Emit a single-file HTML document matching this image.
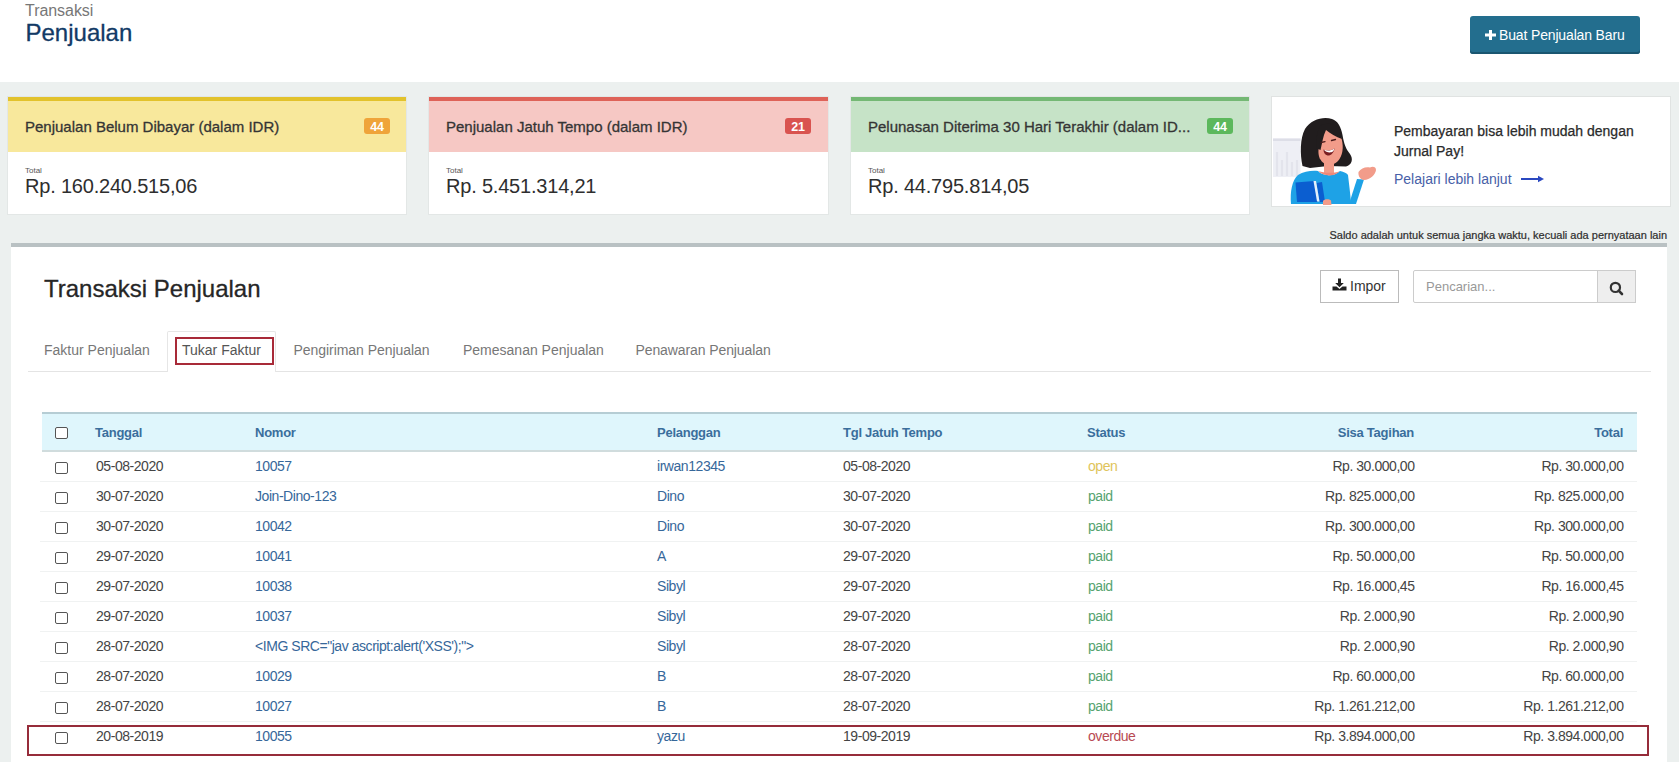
<!DOCTYPE html>
<html><head><meta charset="utf-8"><style>
html,body{margin:0;padding:0;}
body{width:1679px;height:762px;overflow:hidden;background:#ecf0ef;position:relative;font-family:"Liberation Sans",sans-serif;}
.t{position:absolute;white-space:nowrap;}
.r{position:absolute;}
</style></head><body>
<div class="r" style="left:0px;top:0px;width:1679px;height:82px;background:#fff"></div>
<div class="t" style="left:25px;top:3.46px;font-size:16px;line-height:16px;color:#777;font-weight:normal;letter-spacing:-0.05px;">Transaksi</div>
<div class="t" style="left:25.5px;top:21.28px;font-size:24px;line-height:24px;color:#123a66;font-weight:normal;-webkit-text-stroke:0.3px #123a66;">Penjualan</div>
<div class="r" style="left:1470px;top:16px;width:170px;height:38px;background:#236e8e;border-radius:3px;box-shadow:inset 0 -2px 0 #1a5670"></div>
<svg class="r" style="left:1485px;top:30px" width="11" height="10" viewBox="0 0 11 10"><path d="M4 0h3v3.5h4v3h-4v3.5h-3v-3.5h-4v-3h4z" fill="#fff"/></svg>
<div class="t" style="left:1499px;top:28.15px;font-size:14px;line-height:14px;color:#fff;font-weight:normal;letter-spacing:-0.15px;">Buat Penjualan Baru</div>
<div class="r" style="left:8px;top:97px;width:398px;height:117px;background:#fff;box-shadow:0 0 0 1px rgba(0,0,0,.035)"></div>
<div class="r" style="left:8px;top:97px;width:398px;height:4px;background:#e2c22c"></div>
<div class="r" style="left:8px;top:101px;width:398px;height:51px;background:#f8e89c"></div>
<div class="t" style="left:25px;top:119.30px;font-size:15px;line-height:15px;color:#353535;font-weight:normal;-webkit-text-stroke:0.3px #353535;">Penjualan Belum Dibayar (dalam IDR)</div>
<div class="r" style="left:364px;top:118px;width:26px;height:16px;background:#efa43a;border-radius:3px"></div>
<div class="t" style="left:364px;top:118.5px;width:26px;height:16px;line-height:16px;text-align:center;font-size:12.5px;font-weight:bold;color:#fff;letter-spacing:-0.3px">44</div>
<div class="t" style="left:25px;top:167.23px;font-size:8px;line-height:8px;color:#555;font-weight:normal;">Total</div>
<div class="t" style="left:25px;top:176.07px;font-size:20px;line-height:20px;color:#2e2e2e;font-weight:normal;letter-spacing:-0.2px;">Rp. 160.240.515,06</div>
<div class="r" style="left:429px;top:97px;width:399px;height:117px;background:#fff;box-shadow:0 0 0 1px rgba(0,0,0,.035)"></div>
<div class="r" style="left:429px;top:97px;width:399px;height:4px;background:#de6258"></div>
<div class="r" style="left:429px;top:101px;width:399px;height:51px;background:#f6c8c4"></div>
<div class="t" style="left:446px;top:119.30px;font-size:15px;line-height:15px;color:#353535;font-weight:normal;-webkit-text-stroke:0.3px #353535;">Penjualan Jatuh Tempo (dalam IDR)</div>
<div class="r" style="left:785px;top:118px;width:26px;height:16px;background:#d9534f;border-radius:3px"></div>
<div class="t" style="left:785px;top:118.5px;width:26px;height:16px;line-height:16px;text-align:center;font-size:12.5px;font-weight:bold;color:#fff;letter-spacing:-0.3px">21</div>
<div class="t" style="left:446px;top:167.23px;font-size:8px;line-height:8px;color:#555;font-weight:normal;">Total</div>
<div class="t" style="left:446px;top:176.07px;font-size:20px;line-height:20px;color:#2e2e2e;font-weight:normal;letter-spacing:-0.2px;">Rp. 5.451.314,21</div>
<div class="r" style="left:851px;top:97px;width:398px;height:117px;background:#fff;box-shadow:0 0 0 1px rgba(0,0,0,.035)"></div>
<div class="r" style="left:851px;top:97px;width:398px;height:4px;background:#74b874"></div>
<div class="r" style="left:851px;top:101px;width:398px;height:51px;background:#c6e3c7"></div>
<div class="t" style="left:868px;top:119.30px;font-size:15px;line-height:15px;color:#353535;font-weight:normal;-webkit-text-stroke:0.3px #353535;">Pelunasan Diterima 30 Hari Terakhir (dalam ID...</div>
<div class="r" style="left:1207px;top:118px;width:26px;height:16px;background:#5cb85c;border-radius:3px"></div>
<div class="t" style="left:1207px;top:118.5px;width:26px;height:16px;line-height:16px;text-align:center;font-size:12.5px;font-weight:bold;color:#fff;letter-spacing:-0.3px">44</div>
<div class="t" style="left:868px;top:167.23px;font-size:8px;line-height:8px;color:#555;font-weight:normal;">Total</div>
<div class="t" style="left:868px;top:176.07px;font-size:20px;line-height:20px;color:#2e2e2e;font-weight:normal;letter-spacing:-0.2px;">Rp. 44.795.814,05</div>
<div class="r" style="left:1272px;top:97px;width:398px;height:109px;background:#fff;box-shadow:0 0 0 1px rgba(0,0,0,.05)"></div>
<svg class="r" style="left:1272px;top:110px" width="110" height="97" viewBox="0 0 110 97">
<rect x="1" y="28.5" width="27.5" height="38.5" fill="#eeeff5"/>
<rect x="1" y="28.5" width="27.5" height="2.5" fill="#dddee7"/>
<path d="M5 66V42M10 66V50M15 66V42M20 66V52M25 66V50" stroke="#e3e4ec" stroke-width="2.2"/>
<path d="M30.5 56C28 44 28 28 33 19C39 9 52 6 60 9C66 11 69 17 70.5 25C72 34 74 39 78 44C81.5 49 80 55 74 56.5L56 56L38 58Z" fill="#211d1e"/>
<path d="M50 19C56 17 65 19 69 27C71.5 34 71.5 43 67.5 49C63.5 55 57 56 53 54C48 51 46 46 46.5 40C47 34 48 26 50 19Z" fill="#f29c8a"/>
<path d="M48 16C54 12 63 13 68 20C69 24 69 27 70 29C64 27 58 23 54 20C51 26 50 34 48.5 40L44 38C44 30 45 22 48 16Z" fill="#211d1e"/>
<path d="M51.5 39.5C55 41 59 40.5 62.5 38.5C62 43 58.5 46 55.5 45.5C53 45 51.5 42.5 51.5 39.5Z" fill="#7a1e22"/>
<path d="M52 39.8C55 41 59 40.8 62.3 38.8C62 40.5 61 41.8 59.5 42.3C56.5 42.8 53.5 42 52 39.8Z" fill="#fff"/>
<path d="M49 32.5l4 -0.8M59.5 30.5l4 -1" stroke="#4a1c1c" stroke-width="1.3" stroke-linecap="round"/>
<rect x="52" y="50" width="10" height="13" fill="#f29c8a"/>
<path d="M19 94C18 82 20 70 26 65C32 61 40 60.5 46 61C50 66 62 67 68 61C72 62 75 63 76 65C77 74 78.5 84 79 94Z" fill="#1ea2e6"/>
<path d="M46.5 61C51 66.5 62 67 67.5 61.5C63 63 52 63.5 46.5 61Z" fill="#f08878"/>
<path d="M77 94L85 69L92 69.5L84 94Z" fill="#1ea2e6"/>
<path d="M86.5 62C89 58 94 56.5 98 57.5C101 56 104 57 104 60C103.5 65 98 69.5 92 70C88 69.5 86 66 86.5 62Z" fill="#f29c8a"/>
<path d="M23.5 72.5L42 71L46 92L25 92Z" fill="#0b5ed0"/>
<path d="M44.5 73L50 72L53 92L47.5 92Z" fill="#0b5ed0"/>
<path d="M41.5 71L44 71L47.5 91.5L45 91.5Z" fill="#e4f0fb"/>
<path d="M51 91C52 89 57 88.5 59 90.5L59.5 95L51 95Z" fill="#f29c8a"/>
</svg>
<div class="t" style="left:1394px;top:123.65px;font-size:14px;line-height:14px;color:#2a2a2a;font-weight:normal;-webkit-text-stroke:0.25px #2a2a2a;">Pembayaran bisa lebih mudah dengan</div>
<div class="t" style="left:1394px;top:143.65px;font-size:14px;line-height:14px;color:#2a2a2a;font-weight:normal;-webkit-text-stroke:0.25px #2a2a2a;">Jurnal Pay!</div>
<div class="t" style="left:1394px;top:171.65px;font-size:14px;line-height:14px;color:#4760a8;font-weight:normal;">Pelajari lebih lanjut</div>
<svg class="r" style="left:1521px;top:174.5px" width="24" height="8" viewBox="0 0 24 8"><path d="M0 4h19" stroke="#2a48c0" stroke-width="2"/><path d="M17 0.8l6 3.2-6 3.2z" fill="#2a48c0"/></svg>
<div class="t" style="right:12px;top:229.69px;font-size:11px;line-height:11px;color:#2e2e2e;font-weight:normal;-webkit-text-stroke:0.2px #2e2e2e;">Saldo adalah untuk semua jangka waktu, kecuali ada pernyataan lain</div>
<div class="r" style="left:11px;top:243px;width:1656px;height:600px;background:#fff"></div>
<div class="r" style="left:11px;top:243px;width:1656px;height:4px;background:#b9c1c3"></div>
<div class="t" style="left:44px;top:277.28px;font-size:24px;line-height:24px;color:#262626;font-weight:normal;-webkit-text-stroke:0.3px #262626;">Transaksi Penjualan</div>
<div class="r" style="left:1320px;top:270px;width:79px;height:33px;background:#fff;border:1px solid #bbb;box-sizing:border-box"></div>
<div class="t" style="left:1350px;top:278.65px;font-size:14px;line-height:14px;color:#333;font-weight:normal;">Impor</div>
<svg class="r" style="left:1332px;top:278px" width="15" height="13" viewBox="0 0 15 13"><path d="M6 0.5h3v4.5h2.8l-4.3 4.3-4.3-4.3h2.8z" fill="#222"/><path d="M0.5 8.5h4l3 2.6 3-2.6h4v4h-14z" fill="#222"/></svg>
<div class="r" style="left:1413px;top:270px;width:223px;height:33px;background:#fff;border:1px solid #ccc;box-sizing:border-box;border-radius:2px"></div>
<div class="r" style="left:1597px;top:270px;width:39px;height:33px;background:#eee;border:1px solid #ccc;box-sizing:border-box"></div>
<div class="t" style="left:1426px;top:280.00px;font-size:13px;line-height:13px;color:#999;font-weight:normal;">Pencarian...</div>
<svg class="r" style="left:1608px;top:280px" width="16" height="16" viewBox="0 0 16 16"><circle cx="7.4" cy="7.4" r="4.6" fill="none" stroke="#333" stroke-width="2.2"/><path d="M10.6 10.6l3.4 3.4" stroke="#333" stroke-width="2.6" stroke-linecap="round"/></svg>
<div class="r" style="left:28px;top:371px;width:1623px;height:1px;background:#e4e4e4"></div>
<div class="r" style="left:167px;top:331px;width:109px;height:41px;background:#fff;border:1px solid #e6e6e6;border-bottom:none;box-sizing:border-box;border-radius:2px 2px 0 0"></div>
<div class="t" style="left:44px;top:343.15px;font-size:14px;line-height:14px;color:#777;font-weight:normal;">Faktur Penjualan</div>
<div class="t" style="left:182px;top:343.15px;font-size:14px;line-height:14px;color:#555;font-weight:normal;">Tukar Faktur</div>
<div class="t" style="left:293.5px;top:343.15px;font-size:14px;line-height:14px;color:#777;font-weight:normal;letter-spacing:-0.05px;">Pengiriman Penjualan</div>
<div class="t" style="left:463px;top:343.15px;font-size:14px;line-height:14px;color:#777;font-weight:normal;">Pemesanan Penjualan</div>
<div class="t" style="left:635.5px;top:343.15px;font-size:14px;line-height:14px;color:#777;font-weight:normal;letter-spacing:-0.1px;">Penawaran Penjualan</div>
<div class="r" style="left:175px;top:337px;width:99px;height:28px;border:2px solid #a82a38;box-sizing:border-box"></div>
<div class="r" style="left:42px;top:412px;width:1595px;height:40px;background:#dff6fc;border-top:2px solid #b6cdd4;border-bottom:2px solid #d0dcdd;box-sizing:border-box"></div>
<div class="r" style="left:55px;top:427px;width:13px;height:12px;border:1px solid #555;border-radius:2px;box-sizing:border-box;background:#fff"></div>
<div class="t" style="left:95px;top:426.00px;font-size:13px;line-height:13px;color:#3a6e9c;font-weight:bold;letter-spacing:-0.25px;">Tanggal</div>
<div class="t" style="left:255px;top:426.00px;font-size:13px;line-height:13px;color:#3a6e9c;font-weight:bold;letter-spacing:-0.25px;">Nomor</div>
<div class="t" style="left:657px;top:426.00px;font-size:13px;line-height:13px;color:#3a6e9c;font-weight:bold;letter-spacing:-0.25px;">Pelanggan</div>
<div class="t" style="left:843px;top:426.00px;font-size:13px;line-height:13px;color:#3a6e9c;font-weight:bold;letter-spacing:-0.25px;">Tgl Jatuh Tempo</div>
<div class="t" style="left:1087px;top:426.00px;font-size:13px;line-height:13px;color:#3a6e9c;font-weight:bold;letter-spacing:-0.25px;">Status</div>
<div class="t" style="right:265px;top:426.00px;font-size:13px;line-height:13px;color:#3a6e9c;font-weight:bold;letter-spacing:-0.25px;">Sisa Tagihan</div>
<div class="t" style="right:56px;top:426.00px;font-size:13px;line-height:13px;color:#3a6e9c;font-weight:bold;letter-spacing:-0.25px;">Total</div>
<div class="r" style="left:55px;top:462px;width:13px;height:12px;border:1px solid #555;border-radius:2px;box-sizing:border-box;background:#fff"></div>
<div class="t" style="left:96px;top:459.15px;font-size:14px;line-height:14px;color:#444;font-weight:normal;letter-spacing:-0.45px;">05-08-2020</div>
<div class="t" style="left:255px;top:459.15px;font-size:14px;line-height:14px;color:#36679a;font-weight:normal;letter-spacing:-0.45px;">10057</div>
<div class="t" style="left:657px;top:459.15px;font-size:14px;line-height:14px;color:#36679a;font-weight:normal;letter-spacing:-0.45px;">irwan12345</div>
<div class="t" style="left:843px;top:459.15px;font-size:14px;line-height:14px;color:#444;font-weight:normal;letter-spacing:-0.45px;">05-08-2020</div>
<div class="t" style="left:1088px;top:459.15px;font-size:14px;line-height:14px;color:#e0c45a;font-weight:normal;letter-spacing:-0.45px;">open</div>
<div class="t" style="right:264.5px;top:459.15px;font-size:14px;line-height:14px;color:#444;font-weight:normal;letter-spacing:-0.45px;">Rp. 30.000,00</div>
<div class="t" style="right:55.5px;top:459.15px;font-size:14px;line-height:14px;color:#444;font-weight:normal;letter-spacing:-0.45px;">Rp. 30.000,00</div>
<div class="r" style="left:40px;top:481px;width:1597px;height:1px;background:#f0f2f2"></div>
<div class="r" style="left:55px;top:492px;width:13px;height:12px;border:1px solid #555;border-radius:2px;box-sizing:border-box;background:#fff"></div>
<div class="t" style="left:96px;top:489.15px;font-size:14px;line-height:14px;color:#444;font-weight:normal;letter-spacing:-0.45px;">30-07-2020</div>
<div class="t" style="left:255px;top:489.15px;font-size:14px;line-height:14px;color:#36679a;font-weight:normal;letter-spacing:-0.45px;">Join-Dino-123</div>
<div class="t" style="left:657px;top:489.15px;font-size:14px;line-height:14px;color:#36679a;font-weight:normal;letter-spacing:-0.45px;">Dino</div>
<div class="t" style="left:843px;top:489.15px;font-size:14px;line-height:14px;color:#444;font-weight:normal;letter-spacing:-0.45px;">30-07-2020</div>
<div class="t" style="left:1088px;top:489.15px;font-size:14px;line-height:14px;color:#55a370;font-weight:normal;letter-spacing:-0.45px;">paid</div>
<div class="t" style="right:264.5px;top:489.15px;font-size:14px;line-height:14px;color:#444;font-weight:normal;letter-spacing:-0.45px;">Rp. 825.000,00</div>
<div class="t" style="right:55.5px;top:489.15px;font-size:14px;line-height:14px;color:#444;font-weight:normal;letter-spacing:-0.45px;">Rp. 825.000,00</div>
<div class="r" style="left:40px;top:511px;width:1597px;height:1px;background:#f0f2f2"></div>
<div class="r" style="left:55px;top:522px;width:13px;height:12px;border:1px solid #555;border-radius:2px;box-sizing:border-box;background:#fff"></div>
<div class="t" style="left:96px;top:519.15px;font-size:14px;line-height:14px;color:#444;font-weight:normal;letter-spacing:-0.45px;">30-07-2020</div>
<div class="t" style="left:255px;top:519.15px;font-size:14px;line-height:14px;color:#36679a;font-weight:normal;letter-spacing:-0.45px;">10042</div>
<div class="t" style="left:657px;top:519.15px;font-size:14px;line-height:14px;color:#36679a;font-weight:normal;letter-spacing:-0.45px;">Dino</div>
<div class="t" style="left:843px;top:519.15px;font-size:14px;line-height:14px;color:#444;font-weight:normal;letter-spacing:-0.45px;">30-07-2020</div>
<div class="t" style="left:1088px;top:519.15px;font-size:14px;line-height:14px;color:#55a370;font-weight:normal;letter-spacing:-0.45px;">paid</div>
<div class="t" style="right:264.5px;top:519.15px;font-size:14px;line-height:14px;color:#444;font-weight:normal;letter-spacing:-0.45px;">Rp. 300.000,00</div>
<div class="t" style="right:55.5px;top:519.15px;font-size:14px;line-height:14px;color:#444;font-weight:normal;letter-spacing:-0.45px;">Rp. 300.000,00</div>
<div class="r" style="left:40px;top:541px;width:1597px;height:1px;background:#f0f2f2"></div>
<div class="r" style="left:55px;top:552px;width:13px;height:12px;border:1px solid #555;border-radius:2px;box-sizing:border-box;background:#fff"></div>
<div class="t" style="left:96px;top:549.15px;font-size:14px;line-height:14px;color:#444;font-weight:normal;letter-spacing:-0.45px;">29-07-2020</div>
<div class="t" style="left:255px;top:549.15px;font-size:14px;line-height:14px;color:#36679a;font-weight:normal;letter-spacing:-0.45px;">10041</div>
<div class="t" style="left:657px;top:549.15px;font-size:14px;line-height:14px;color:#36679a;font-weight:normal;letter-spacing:-0.45px;">A</div>
<div class="t" style="left:843px;top:549.15px;font-size:14px;line-height:14px;color:#444;font-weight:normal;letter-spacing:-0.45px;">29-07-2020</div>
<div class="t" style="left:1088px;top:549.15px;font-size:14px;line-height:14px;color:#55a370;font-weight:normal;letter-spacing:-0.45px;">paid</div>
<div class="t" style="right:264.5px;top:549.15px;font-size:14px;line-height:14px;color:#444;font-weight:normal;letter-spacing:-0.45px;">Rp. 50.000,00</div>
<div class="t" style="right:55.5px;top:549.15px;font-size:14px;line-height:14px;color:#444;font-weight:normal;letter-spacing:-0.45px;">Rp. 50.000,00</div>
<div class="r" style="left:40px;top:571px;width:1597px;height:1px;background:#f0f2f2"></div>
<div class="r" style="left:55px;top:582px;width:13px;height:12px;border:1px solid #555;border-radius:2px;box-sizing:border-box;background:#fff"></div>
<div class="t" style="left:96px;top:579.15px;font-size:14px;line-height:14px;color:#444;font-weight:normal;letter-spacing:-0.45px;">29-07-2020</div>
<div class="t" style="left:255px;top:579.15px;font-size:14px;line-height:14px;color:#36679a;font-weight:normal;letter-spacing:-0.45px;">10038</div>
<div class="t" style="left:657px;top:579.15px;font-size:14px;line-height:14px;color:#36679a;font-weight:normal;letter-spacing:-0.45px;">Sibyl</div>
<div class="t" style="left:843px;top:579.15px;font-size:14px;line-height:14px;color:#444;font-weight:normal;letter-spacing:-0.45px;">29-07-2020</div>
<div class="t" style="left:1088px;top:579.15px;font-size:14px;line-height:14px;color:#55a370;font-weight:normal;letter-spacing:-0.45px;">paid</div>
<div class="t" style="right:264.5px;top:579.15px;font-size:14px;line-height:14px;color:#444;font-weight:normal;letter-spacing:-0.45px;">Rp. 16.000,45</div>
<div class="t" style="right:55.5px;top:579.15px;font-size:14px;line-height:14px;color:#444;font-weight:normal;letter-spacing:-0.45px;">Rp. 16.000,45</div>
<div class="r" style="left:40px;top:601px;width:1597px;height:1px;background:#f0f2f2"></div>
<div class="r" style="left:55px;top:612px;width:13px;height:12px;border:1px solid #555;border-radius:2px;box-sizing:border-box;background:#fff"></div>
<div class="t" style="left:96px;top:609.15px;font-size:14px;line-height:14px;color:#444;font-weight:normal;letter-spacing:-0.45px;">29-07-2020</div>
<div class="t" style="left:255px;top:609.15px;font-size:14px;line-height:14px;color:#36679a;font-weight:normal;letter-spacing:-0.45px;">10037</div>
<div class="t" style="left:657px;top:609.15px;font-size:14px;line-height:14px;color:#36679a;font-weight:normal;letter-spacing:-0.45px;">Sibyl</div>
<div class="t" style="left:843px;top:609.15px;font-size:14px;line-height:14px;color:#444;font-weight:normal;letter-spacing:-0.45px;">29-07-2020</div>
<div class="t" style="left:1088px;top:609.15px;font-size:14px;line-height:14px;color:#55a370;font-weight:normal;letter-spacing:-0.45px;">paid</div>
<div class="t" style="right:264.5px;top:609.15px;font-size:14px;line-height:14px;color:#444;font-weight:normal;letter-spacing:-0.45px;">Rp. 2.000,90</div>
<div class="t" style="right:55.5px;top:609.15px;font-size:14px;line-height:14px;color:#444;font-weight:normal;letter-spacing:-0.45px;">Rp. 2.000,90</div>
<div class="r" style="left:40px;top:631px;width:1597px;height:1px;background:#f0f2f2"></div>
<div class="r" style="left:55px;top:642px;width:13px;height:12px;border:1px solid #555;border-radius:2px;box-sizing:border-box;background:#fff"></div>
<div class="t" style="left:96px;top:639.15px;font-size:14px;line-height:14px;color:#444;font-weight:normal;letter-spacing:-0.45px;">28-07-2020</div>
<div class="t" style="left:255px;top:639.15px;font-size:14px;line-height:14px;color:#36679a;font-weight:normal;letter-spacing:-0.45px;">&lt;IMG SRC=&quot;jav ascript:alert('XSS');&quot;&gt;</div>
<div class="t" style="left:657px;top:639.15px;font-size:14px;line-height:14px;color:#36679a;font-weight:normal;letter-spacing:-0.45px;">Sibyl</div>
<div class="t" style="left:843px;top:639.15px;font-size:14px;line-height:14px;color:#444;font-weight:normal;letter-spacing:-0.45px;">28-07-2020</div>
<div class="t" style="left:1088px;top:639.15px;font-size:14px;line-height:14px;color:#55a370;font-weight:normal;letter-spacing:-0.45px;">paid</div>
<div class="t" style="right:264.5px;top:639.15px;font-size:14px;line-height:14px;color:#444;font-weight:normal;letter-spacing:-0.45px;">Rp. 2.000,90</div>
<div class="t" style="right:55.5px;top:639.15px;font-size:14px;line-height:14px;color:#444;font-weight:normal;letter-spacing:-0.45px;">Rp. 2.000,90</div>
<div class="r" style="left:40px;top:661px;width:1597px;height:1px;background:#f0f2f2"></div>
<div class="r" style="left:55px;top:672px;width:13px;height:12px;border:1px solid #555;border-radius:2px;box-sizing:border-box;background:#fff"></div>
<div class="t" style="left:96px;top:669.15px;font-size:14px;line-height:14px;color:#444;font-weight:normal;letter-spacing:-0.45px;">28-07-2020</div>
<div class="t" style="left:255px;top:669.15px;font-size:14px;line-height:14px;color:#36679a;font-weight:normal;letter-spacing:-0.45px;">10029</div>
<div class="t" style="left:657px;top:669.15px;font-size:14px;line-height:14px;color:#36679a;font-weight:normal;letter-spacing:-0.45px;">B</div>
<div class="t" style="left:843px;top:669.15px;font-size:14px;line-height:14px;color:#444;font-weight:normal;letter-spacing:-0.45px;">28-07-2020</div>
<div class="t" style="left:1088px;top:669.15px;font-size:14px;line-height:14px;color:#55a370;font-weight:normal;letter-spacing:-0.45px;">paid</div>
<div class="t" style="right:264.5px;top:669.15px;font-size:14px;line-height:14px;color:#444;font-weight:normal;letter-spacing:-0.45px;">Rp. 60.000,00</div>
<div class="t" style="right:55.5px;top:669.15px;font-size:14px;line-height:14px;color:#444;font-weight:normal;letter-spacing:-0.45px;">Rp. 60.000,00</div>
<div class="r" style="left:40px;top:691px;width:1597px;height:1px;background:#f0f2f2"></div>
<div class="r" style="left:55px;top:702px;width:13px;height:12px;border:1px solid #555;border-radius:2px;box-sizing:border-box;background:#fff"></div>
<div class="t" style="left:96px;top:699.15px;font-size:14px;line-height:14px;color:#444;font-weight:normal;letter-spacing:-0.45px;">28-07-2020</div>
<div class="t" style="left:255px;top:699.15px;font-size:14px;line-height:14px;color:#36679a;font-weight:normal;letter-spacing:-0.45px;">10027</div>
<div class="t" style="left:657px;top:699.15px;font-size:14px;line-height:14px;color:#36679a;font-weight:normal;letter-spacing:-0.45px;">B</div>
<div class="t" style="left:843px;top:699.15px;font-size:14px;line-height:14px;color:#444;font-weight:normal;letter-spacing:-0.45px;">28-07-2020</div>
<div class="t" style="left:1088px;top:699.15px;font-size:14px;line-height:14px;color:#55a370;font-weight:normal;letter-spacing:-0.45px;">paid</div>
<div class="t" style="right:264.5px;top:699.15px;font-size:14px;line-height:14px;color:#444;font-weight:normal;letter-spacing:-0.45px;">Rp. 1.261.212,00</div>
<div class="t" style="right:55.5px;top:699.15px;font-size:14px;line-height:14px;color:#444;font-weight:normal;letter-spacing:-0.45px;">Rp. 1.261.212,00</div>
<div class="r" style="left:40px;top:721px;width:1597px;height:1px;background:#f0f2f2"></div>
<div class="r" style="left:55px;top:732px;width:13px;height:12px;border:1px solid #555;border-radius:2px;box-sizing:border-box;background:#fff"></div>
<div class="t" style="left:96px;top:729.15px;font-size:14px;line-height:14px;color:#444;font-weight:normal;letter-spacing:-0.45px;">20-08-2019</div>
<div class="t" style="left:255px;top:729.15px;font-size:14px;line-height:14px;color:#36679a;font-weight:normal;letter-spacing:-0.45px;">10055</div>
<div class="t" style="left:657px;top:729.15px;font-size:14px;line-height:14px;color:#36679a;font-weight:normal;letter-spacing:-0.45px;">yazu</div>
<div class="t" style="left:843px;top:729.15px;font-size:14px;line-height:14px;color:#444;font-weight:normal;letter-spacing:-0.45px;">19-09-2019</div>
<div class="t" style="left:1088px;top:729.15px;font-size:14px;line-height:14px;color:#b84a52;font-weight:normal;letter-spacing:-0.45px;">overdue</div>
<div class="t" style="right:264.5px;top:729.15px;font-size:14px;line-height:14px;color:#444;font-weight:normal;letter-spacing:-0.45px;">Rp. 3.894.000,00</div>
<div class="t" style="right:55.5px;top:729.15px;font-size:14px;line-height:14px;color:#444;font-weight:normal;letter-spacing:-0.45px;">Rp. 3.894.000,00</div>
<div class="r" style="left:27px;top:725px;width:1622px;height:31px;border:2px solid #962c3a;box-sizing:border-box"></div>
</body></html>
